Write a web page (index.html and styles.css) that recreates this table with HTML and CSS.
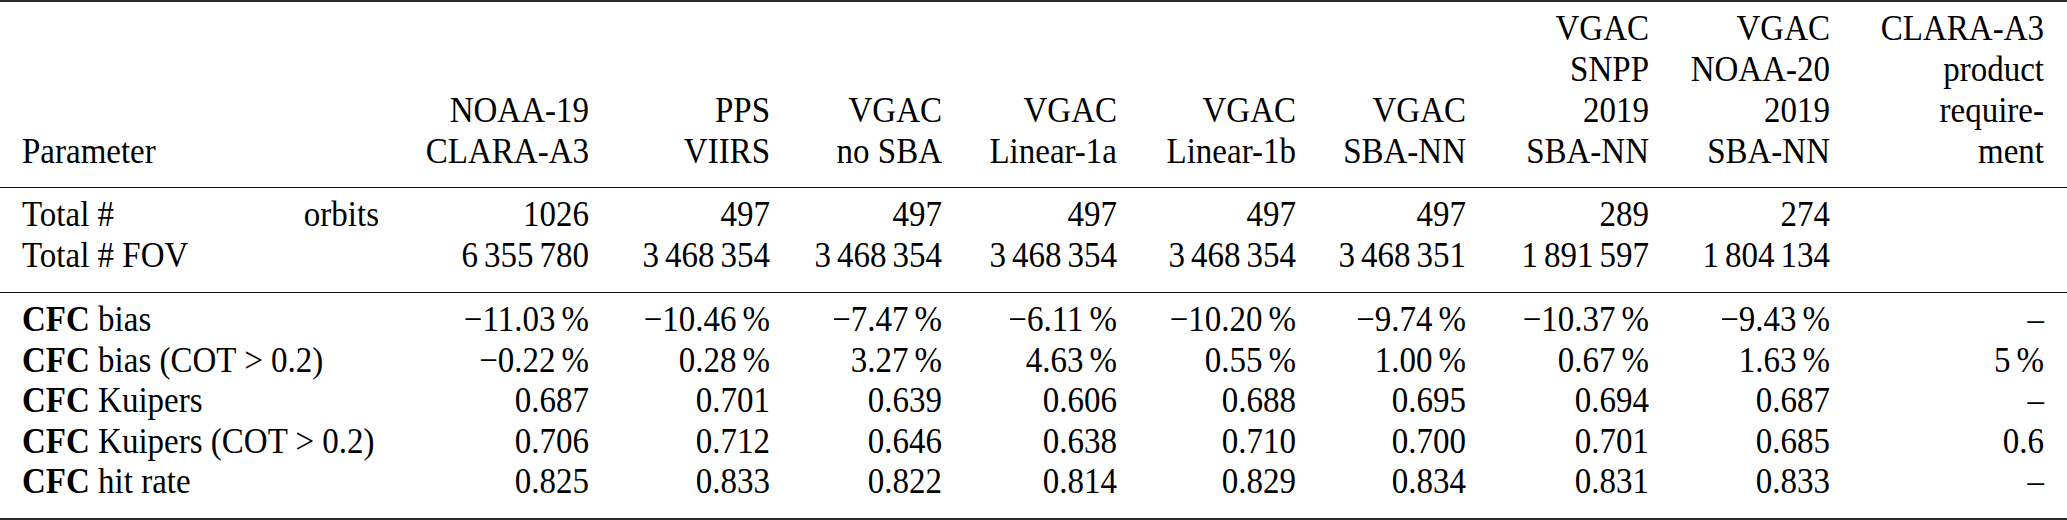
FILE: index.html
```html
<!DOCTYPE html>
<html lang="en">
<head>
<meta charset="utf-8">
<title>CFC validation table</title>
<link rel="stylesheet" href="styles.css">
</head>
<body>
<div class="tbl">
  <div class="cell head first left"><span class="ln">Parameter</span></div>
  <div class="cell head"><span class="ln">NOAA-19</span><span class="ln">CLARA-A3</span></div>
  <div class="cell head"><span class="ln">PPS</span><span class="ln">VIIRS</span></div>
  <div class="cell head"><span class="ln">VGAC</span><span class="ln">no SBA</span></div>
  <div class="cell head"><span class="ln">VGAC</span><span class="ln">Linear-1a</span></div>
  <div class="cell head"><span class="ln">VGAC</span><span class="ln">Linear-1b</span></div>
  <div class="cell head"><span class="ln">VGAC</span><span class="ln">SBA-NN</span></div>
  <div class="cell head"><span class="ln">VGAC</span><span class="ln">SNPP</span><span class="ln">2019</span><span class="ln">SBA-NN</span></div>
  <div class="cell head"><span class="ln">VGAC</span><span class="ln">NOAA-20</span><span class="ln">2019</span><span class="ln">SBA-NN</span></div>
  <div class="cell head"><span class="ln">CLARA-A3</span><span class="ln">product</span><span class="ln">require-</span><span class="ln">ment</span></div>

  <div class="rule rule-a"></div>

  <div class="cell r1 first split"><span>Total #</span><span>orbits</span></div>
  <div class="cell r1">1026</div>
  <div class="cell r1">497</div>
  <div class="cell r1">497</div>
  <div class="cell r1">497</div>
  <div class="cell r1">497</div>
  <div class="cell r1">497</div>
  <div class="cell r1">289</div>
  <div class="cell r1">274</div>
  <div class="cell r1"></div>

  <div class="cell r1 first left">Total # FOV</div>
  <div class="cell r1">6<span class="th"></span>355<span class="th"></span>780</div>
  <div class="cell r1">3<span class="th"></span>468<span class="th"></span>354</div>
  <div class="cell r1">3<span class="th"></span>468<span class="th"></span>354</div>
  <div class="cell r1">3<span class="th"></span>468<span class="th"></span>354</div>
  <div class="cell r1">3<span class="th"></span>468<span class="th"></span>354</div>
  <div class="cell r1">3<span class="th"></span>468<span class="th"></span>351</div>
  <div class="cell r1">1<span class="th"></span>891<span class="th"></span>597</div>
  <div class="cell r1">1<span class="th"></span>804<span class="th"></span>134</div>
  <div class="cell r1"></div>

  <div class="rule rule-b"></div>

  <div class="cell r2 first left"><b>CFC</b> bias</div>
  <div class="cell r2">&minus;11.03<span class="th"></span>%</div>
  <div class="cell r2">&minus;10.46<span class="th"></span>%</div>
  <div class="cell r2">&minus;7.47<span class="th"></span>%</div>
  <div class="cell r2">&minus;6.11<span class="th"></span>%</div>
  <div class="cell r2">&minus;10.20<span class="th"></span>%</div>
  <div class="cell r2">&minus;9.74<span class="th"></span>%</div>
  <div class="cell r2">&minus;10.37<span class="th"></span>%</div>
  <div class="cell r2">&minus;9.43<span class="th"></span>%</div>
  <div class="cell r2">&ndash;</div>

  <div class="cell r2 first left"><b>CFC</b> bias (COT &gt; 0.2)</div>
  <div class="cell r2">&minus;0.22<span class="th"></span>%</div>
  <div class="cell r2">0.28<span class="th"></span>%</div>
  <div class="cell r2">3.27<span class="th"></span>%</div>
  <div class="cell r2">4.63<span class="th"></span>%</div>
  <div class="cell r2">0.55<span class="th"></span>%</div>
  <div class="cell r2">1.00<span class="th"></span>%</div>
  <div class="cell r2">0.67<span class="th"></span>%</div>
  <div class="cell r2">1.63<span class="th"></span>%</div>
  <div class="cell r2">5<span class="th"></span>%</div>

  <div class="cell r2 first left"><b>CFC</b> Kuipers</div>
  <div class="cell r2">0.687</div>
  <div class="cell r2">0.701</div>
  <div class="cell r2">0.639</div>
  <div class="cell r2">0.606</div>
  <div class="cell r2">0.688</div>
  <div class="cell r2">0.695</div>
  <div class="cell r2">0.694</div>
  <div class="cell r2">0.687</div>
  <div class="cell r2">&ndash;</div>

  <div class="cell r2 first left"><b>CFC</b> Kuipers (COT &gt; 0.2)</div>
  <div class="cell r2">0.706</div>
  <div class="cell r2">0.712</div>
  <div class="cell r2">0.646</div>
  <div class="cell r2">0.638</div>
  <div class="cell r2">0.710</div>
  <div class="cell r2">0.700</div>
  <div class="cell r2">0.701</div>
  <div class="cell r2">0.685</div>
  <div class="cell r2">0.6</div>

  <div class="cell r2 first left"><b>CFC</b> hit rate</div>
  <div class="cell r2">0.825</div>
  <div class="cell r2">0.833</div>
  <div class="cell r2">0.822</div>
  <div class="cell r2">0.814</div>
  <div class="cell r2">0.829</div>
  <div class="cell r2">0.834</div>
  <div class="cell r2">0.831</div>
  <div class="cell r2">0.833</div>
  <div class="cell r2">&ndash;</div>
</div>
</body>
</html>
```

FILE: styles.css
```css
html, body {
  margin: 0;
  padding: 0;
  background: #ffffff;
}

body {
  width: 2067px;
  height: 520px;
  overflow: hidden;
  font-family: "Liberation Serif", "Times New Roman", serif;
}

.tbl {
  display: grid;
  grid-template-columns: 22px 357px 210px 181px 172px 175px 179px 170px 183px 181px 214px 23px;
  border-top: 2px solid #2a2a2a;
  border-bottom: 2px solid #2a2a2a;
  padding: 7px 0 15.5px 0;
  font-family: "Liberation Serif", "Times New Roman", serif;
  font-size: 33px;
  color: #000;
  box-sizing: border-box;
  height: 520px;
}

.cell {
  text-align: right;
  white-space: nowrap;
}

.cell.first {
  grid-column: 2;
}

.cell.left {
  text-align: left;
}

.head {
  line-height: 41px;
  align-self: end;
}

.ln {
  display: block;
  transform: scaleY(1.07);
  transform-origin: 0 31.7px;
}

.r1 {
  line-height: 41px;
  transform: scaleY(1.07);
  transform-origin: 0 31.7px;
}

.r2 {
  line-height: 40.5px;
  transform: scaleY(1.07);
  transform-origin: 0 31.4px;
}

.th {
  display: inline-block;
  width: 6px;
}

.split {
  display: flex;
  justify-content: space-between;
}

.rule {
  grid-column: 1 / -1;
  height: 1px;
  background: #111;
}

.rule-a {
  margin: 14px 0 7px 0;
}

.rule-b {
  margin: 15px 0 7px 0;
}

b {
  font-weight: bold;
}
```
